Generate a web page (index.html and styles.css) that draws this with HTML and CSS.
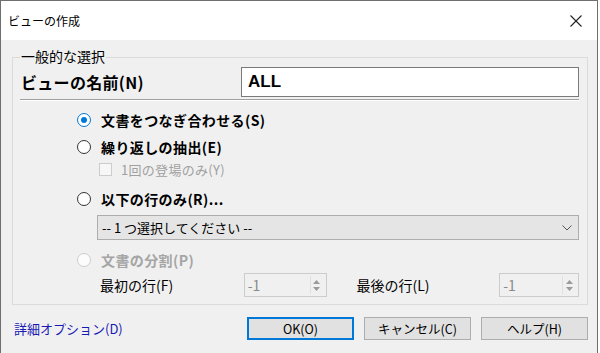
FILE: index.html
```html
<!DOCTYPE html>
<html lang="ja">
<head>
  <meta charset="UTF-8" />
  <title>ビューの作成</title>
  <link rel="stylesheet" href="styles.css">
</head>
<body>
  <div class="ventana">
    <div class="titulo">
      <span>ビューの作成</span>
      <svg class="cerrar" viewBox="0 0 12 12" width="12" height="12">
        <line x1="0.5" y1="0.5" x2="11.5" y2="11.5" stroke="#222" stroke-width="1.1"/>
        <line x1="11.5" y1="0.5" x2="0.5" y2="11.5" stroke="#222" stroke-width="1.1"/>
      </svg>
    </div>

    <div class="cuerpo">
      <div class="grupo">
        <span class="grupo-titulo">一般的な選択</span>

        <div class="fila-nombre">
          <span class="etiqueta-nombre">ビューの名前(N)</span>
          <div class="campo-nombre">ALL</div>
        </div>
        <div class="regla"></div>

        <div class="opciones">
          <div class="opcion op1">
            <span class="radio marcado"></span>
            <span>文書をつなぎ合わせる(S)</span>
          </div>
          <div class="opcion op2">
            <span class="radio"></span>
            <span>繰り返しの抽出(E)</span>
          </div>
          <div class="casilla-fila">
            <span class="casilla"></span>
            <span>1回の登場のみ(Y)</span>
          </div>
          <div class="opcion op3">
            <span class="radio"></span>
            <span>以下の行のみ(R)...</span>
          </div>
          <div class="lista">
            <span>-- 1 つ選択してください --</span>
            <svg viewBox="0 0 10 6" width="10" height="6">
              <polyline points="0.5,0.5 5,5 9.5,0.5" fill="none" stroke="#555" stroke-width="1"/>
            </svg>
          </div>
          <div class="opcion op4 apagado">
            <span class="radio"></span>
            <span>文書の分割(P)</span>
          </div>
          <div class="fila-giro">
            <span class="etq-giro">最初の行(F)</span>
            <div class="giro">
              <span>-1</span>
              <span class="flechas">
                <svg viewBox="0 0 7 4" width="7" height="4"><polygon points="0,4 3.5,0 7,4" fill="#9a9a9a"/></svg>
                <svg viewBox="0 0 7 4" width="7" height="4"><polygon points="0,0 3.5,4 7,0" fill="#9a9a9a"/></svg>
              </span>
            </div>
            <span class="etq-giro etq2">最後の行(L)</span>
            <div class="giro giro2">
              <span>-1</span>
              <span class="flechas">
                <svg viewBox="0 0 7 4" width="7" height="4"><polygon points="0,4 3.5,0 7,4" fill="#9a9a9a"/></svg>
                <svg viewBox="0 0 7 4" width="7" height="4"><polygon points="0,0 3.5,4 7,0" fill="#9a9a9a"/></svg>
              </span>
            </div>
          </div>
        </div>
      </div>

      <div class="pie">
        <a class="enlace">詳細オプション(D)</a>
        <div class="botones">
          <button class="boton principal">OK(O)</button>
          <button class="boton">キャンセル(C)</button>
          <button class="boton">ヘルプ(H)</button>
        </div>
      </div>
    </div>
  </div>
</body>
</html>
```

FILE: styles.css
```css
body {
  margin: 0;
  background: #ffffff;
  font-family: "Noto Sans CJK JP", "Noto Sans", sans-serif;
  font-size: 12px;
  color: #000;
}

.ventana {
  width: 598px;
  height: 353px;
  box-sizing: border-box;
  border: 1px solid #6f6f6f;
  border-bottom: none;
  display: flex;
  flex-direction: column;
}

.titulo {
  height: 39px;
  background: #ffffff;
  display: flex;
  align-items: center;
  justify-content: space-between;
  padding: 0 15px 0 7px;
  font-size: 12px;
}

.cerrar {
  margin-top: 1px;
}

.cuerpo {
  flex: 1;
  background: #f0f0f0;
  padding: 17px 9px 0 11px;
}

.grupo {
  position: relative;
  border: 1px solid #dadada;
  height: 246px;
}

.grupo-titulo {
  position: absolute;
  top: -11px;
  left: 7px;
  padding: 0 1px;
  background: #f0f0f0;
  font-size: 14px;
  line-height: 18px;
}

.fila-nombre {
  display: flex;
  align-items: center;
  margin: 9px 8px 0 8px;
  height: 30px;
}

.etiqueta-nombre {
  flex: 1;
  font-size: 16px;
  font-weight: bold;
  letter-spacing: 0.3px;
}

.campo-nombre {
  width: 338px;
  height: 30px;
  box-sizing: border-box;
  border: 1px solid #7a7a7a;
  background: #ffffff;
  padding: 0 6px;
  font-family: "Liberation Sans", Arial, sans-serif;
  font-size: 17px;
  font-weight: bold;
  line-height: 28px;
}

.regla {
  margin: 2px 8px 0 7px;
  border-top: 1px solid #a0a0a0;
  border-bottom: 1px solid #ffffff;
}

.opciones {
  padding-left: 64px;
  padding-right: 8px;
}

.opcion {
  display: flex;
  align-items: center;
  height: 20px;
  font-size: 14px;
  font-weight: bold;
  letter-spacing: 0.4px;
}

.op1 { margin-top: 9px; }
.op2 { margin-top: 7px; }
.op3 { margin-top: 11px; }
.op4 { margin-top: 10px; }

.radio {
  width: 14px;
  height: 14px;
  box-sizing: border-box;
  border: 1px solid #333;
  border-radius: 50%;
  background: #ffffff;
  margin-right: 10px;
  position: relative;
}

.radio.marcado {
  border-color: #0078d7;
}

.radio.marcado::after {
  content: "";
  position: absolute;
  left: 3px;
  top: 3px;
  width: 6px;
  height: 6px;
  border-radius: 50%;
  background: #0078d7;
}

.apagado {
  color: #a5a5a5;
}

.apagado .radio {
  border-color: #cccccc;
  background: #fcfcfc;
}

.casilla-fila {
  display: flex;
  align-items: center;
  height: 18px;
  margin-top: 3px;
  padding-left: 22px;
  color: #a0a0a0;
  font-size: 13px;
  letter-spacing: 0.3px;
}

.casilla {
  width: 13px;
  height: 13px;
  box-sizing: border-box;
  border: 1px solid #cccccc;
  background: #f7f7f7;
  margin-right: 9px;
}

.lista {
  margin: 6px 0 0 20px;
  height: 25px;
  box-sizing: border-box;
  border: 1px solid #adadad;
  background: #e5e5e5;
  display: flex;
  align-items: center;
  justify-content: space-between;
  padding: 0 6px 0 4px;
  font-size: 13px;
}

.fila-giro {
  display: flex;
  align-items: center;
  height: 24px;
  margin-top: 3px;
  padding-left: 23px;
  font-size: 14px;
}

.etq-giro {
  width: 144px;
}

.etq2 {
  margin-left: 30px;
}

.giro {
  width: 83px;
  height: 24px;
  box-sizing: border-box;
  border: 1px solid #cccccc;
  background: #f0f0f0;
  display: flex;
  align-items: center;
  justify-content: space-between;
  padding: 0 3px 0 3px;
  color: #8a8a8a;
  font-size: 14px;
}

.giro2 {
  width: 80px;
  margin-left: -1px;
}

.flechas {
  width: 12px;
  height: 18px;
  border-left: 1px solid #e0e0e0;
  display: flex;
  flex-direction: column;
  align-items: center;
  justify-content: center;
  gap: 3px;
}

.flechas svg {
  display: block;
}

.pie {
  display: flex;
  align-items: center;
  justify-content: space-between;
  margin-top: 12px;
  padding-left: 2px;
}

.enlace {
  color: #1a1ab3;
  font-size: 13px;
}

.botones {
  display: flex;
  gap: 10px;
}

.boton {
  width: 107px;
  height: 23px;
  box-sizing: border-box;
  border: 1px solid #adadad;
  background: #e1e1e1;
  font-family: "Noto Sans CJK JP", "Noto Sans", sans-serif;
  font-size: 12.5px;
  color: #000;
  padding: 0;
}

.boton.principal {
  border: 2px solid #0078d7;
}
```
